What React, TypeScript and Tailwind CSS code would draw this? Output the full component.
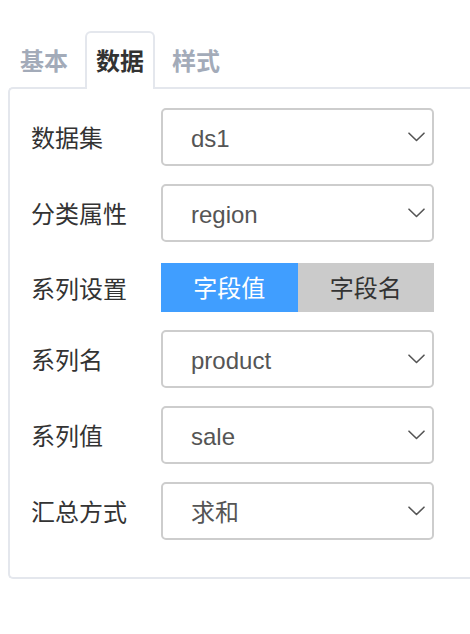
import { useState } from 'react';

const FONT = { fontFamily: '"Liberation Sans", "Noto Sans CJK SC", sans-serif' };

const TABS = ['基本', '数据', '样式'];

function Chevron() {
  return (
    <svg width="17" height="10" viewBox="0 0 17 10" fill="none" className="shrink-0">
      <path d="M1 1.2 L8.5 8.5 L16 1.2" stroke="#555" strokeWidth="1.6" strokeLinecap="round" strokeLinejoin="round" />
    </svg>
  );
}

function Field({ label, children, className = '' }: { label: string; children: React.ReactNode; className?: string }) {
  return (
    <div className={`flex items-center ${className}`}>
      <div className="w-[130px] shrink-0 pt-[4px] text-[24px] leading-none text-[#333]">{label}</div>
      {children}
    </div>
  );
}

function Select({ value }: { value: string }) {
  return (
    <div className="flex h-[58px] w-[273px] items-center justify-between rounded-[5px] border-2 border-[#cdcdcd] bg-white pl-[28px] pr-[7px]">
      <span className="pt-[3px] text-[24px] leading-none text-[#555]">{value}</span>
      <Chevron />
    </div>
  );
}

export default function App() {
  const [tab, setTab] = useState(1);
  const [mode, setMode] = useState(0);

  return (
    <div className="min-h-[634px] w-[470px] overflow-hidden bg-white pt-[31px]" style={FONT}>
      <div className="relative z-10 -mb-[2px] flex gap-[6px] pl-[9px]">
        {TABS.map((t, i) => (
          <button
            key={t}
            onClick={() => setTab(i)}
            className={
              'h-[58px] w-[70px] rounded-t-[6px] border-2 border-b-0 pt-[2px] text-[24px] font-bold leading-none ' +
              (tab === i ? 'border-[#e4e7ed] bg-white text-[#333]' : 'border-transparent text-[#a3abb9]')
            }
          >
            {t}
          </button>
        ))}
      </div>

      <div className="ml-2 w-[480px] rounded-l-[5px] border-2 border-r-0 border-[#e4e7ed] pb-[37px] pl-[21px] pt-[19px]">
        <Field label="数据集">
          <Select value="ds1" />
        </Field>
        <Field label="分类属性" className="mt-[18px]">
          <Select value="region" />
        </Field>
        <Field label="系列设置" className="mt-[21px]">
          <div className="flex h-[49px] w-[273px]">
            {['字段值', '字段名'].map((s, i) => (
              <button
                key={s}
                onClick={() => setMode(i)}
                className={
                  'flex-1 pt-[3px] text-[24px] leading-none ' +
                  (mode === i ? 'bg-[#409eff] text-white' : 'bg-[#cbcbcb] text-[#333]')
                }
              >
                {s}
              </button>
            ))}
          </div>
        </Field>
        <Field label="系列名" className="mt-[18px]">
          <Select value="product" />
        </Field>
        <Field label="系列值" className="mt-[18px]">
          <Select value="sale" />
        </Field>
        <Field label="汇总方式" className="mt-[18px]">
          <Select value="求和" />
        </Field>
      </div>
    </div>
  );
}
